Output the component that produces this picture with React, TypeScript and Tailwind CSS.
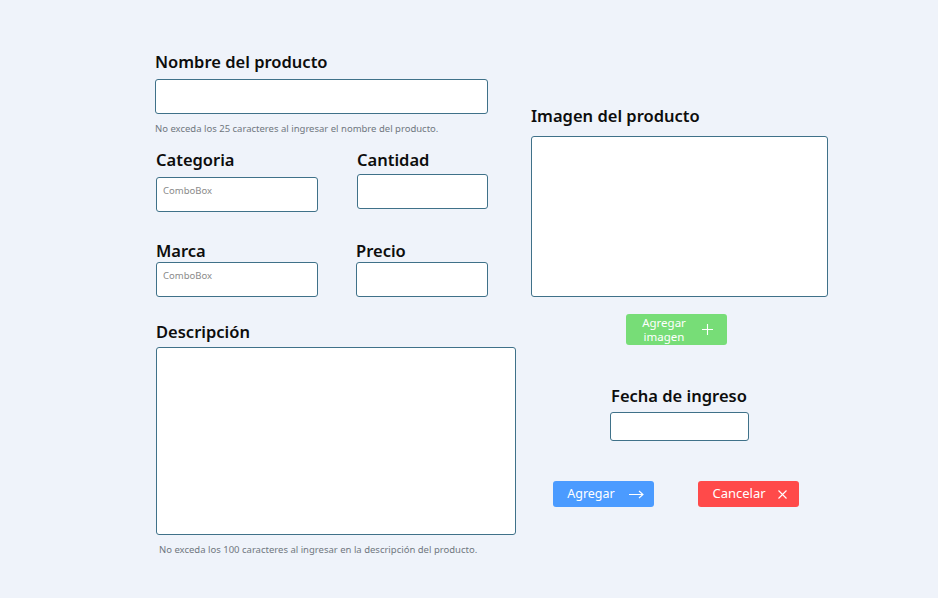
import React from "react";

const font = { fontFamily: '"Noto Sans", "Open Sans", sans-serif' };

function Label({ children, className = "" }: { children: React.ReactNode; className?: string }) {
  return (
    <div className={`text-[16.5px] leading-[22px] font-semibold text-[#0d0d0d] whitespace-nowrap ${className}`}>{children}</div>
  );
}

function Box({ className = "", children }: { className?: string; children?: React.ReactNode }) {
  return (
    <div className={`bg-white border border-[#3f7189] rounded-[3px] ${className}`}>{children}</div>
  );
}

function Combo() {
  return (
    <Box className="w-[162px] h-[35px] px-[6px] pt-[7px]">
      <div className="text-[9.5px] leading-[12px] text-[#8a8a8a]">ComboBox</div>
    </Box>
  );
}

export default function App() {
  return (
    <div style={font} className="w-[938px] h-[598px] bg-[#eff3fa] flex pl-[155px] pt-[51px] overflow-hidden">
      {/* Left column */}
      <div className="w-[361px] flex flex-col">
        <Label>Nombre del producto</Label>
        <Box className="w-[333px] h-[35px] mt-[6px]" />
        <div className="text-[9.5px] leading-[12px] text-[#707780] mt-[9px] whitespace-nowrap">
          No exceda los 25 caracteres al ingresar el nombre del producto.
        </div>
        <div className="flex mt-[14px] pl-[1px]">
          <div className="w-[201px]">
            <Label>Categoria</Label>
            <div className="mt-[6px]">
              <Combo />
            </div>
          </div>
          <div>
            <Label>Cantidad</Label>
            <Box className="w-[131px] h-[35px] mt-[3px]" />
          </div>
        </div>
        <div className="flex mt-[28px] pl-[1px]">
          <div className="w-[200px]">
            <Label>Marca</Label>
            <Combo />
          </div>
          <div>
            <Label>Precio</Label>
            <Box className="w-[132px] h-[35px]" />
          </div>
        </div>
        <Label className="mt-[24px] pl-[1px]">Descripción</Label>
        <Box className="ml-[1px] w-[360px] h-[188px] mt-[4px]" />
        <div className="text-[9.5px] leading-[12px] text-[#707780] mt-[9px] pl-[4px] whitespace-nowrap">
          No exceda los 100 caracteres al ingresar en la descripción del producto.
        </div>
      </div>

      {/* Right column */}
      <div className="ml-[15px] w-[297px] flex flex-col pt-[54px]">
        <Label>Imagen del producto</Label>
        <Box className="w-[297px] h-[161px] mt-[9px]" />
        <div className="flex justify-center mt-[17px] pr-[6px]">
          <button className="w-[101px] h-[31px] rounded-[3px] bg-[#77dd77] text-white flex items-center justify-center gap-[16px] pl-[2px]">
            <span className="text-[11.5px] leading-[14px] text-center">
              Agregar
              <br />
              imagen
            </span>
            <svg width="11" height="11" viewBox="0 0 11 11" fill="none" stroke="white" strokeWidth="1.1">
              <path d="M5.5 0v11M0 5.5h11" />
            </svg>
          </button>
        </div>
        <div className="flex flex-col items-center mt-[40px]">
          <div className="w-[139px]">
            <Label className="pl-[1px]">Fecha de ingreso</Label>
            <Box className="w-[139px] h-[29px] mt-[5px]" />
          </div>
        </div>
        <div className="flex mt-[40px] ml-[22px] gap-[44px]">
          <button className="w-[101px] h-[26px] rounded-[3px] bg-[#4b9bff] text-white flex items-center justify-center gap-[14px] text-[12.5px] pl-[4px]">
            <span>Agregar</span>
            <svg width="15" height="9" viewBox="0 0 15 9" fill="none" stroke="white" strokeWidth="1.1">
              <path d="M0 4.5h14M10 1l4 3.5-4 3.5" />
            </svg>
          </button>
          <button className="w-[101px] h-[26px] rounded-[3px] bg-[#ff4a4a] text-white flex items-center justify-center gap-[12px] text-[13px] pl-[2px]">
            <span>Cancelar</span>
            <svg width="9" height="9" viewBox="0 0 9 9" fill="none" stroke="white" strokeWidth="1.1">
              <path d="M0.5 0.5l8 8M8.5 0.5l-8 8" />
            </svg>
          </button>
        </div>
      </div>
    </div>
  );
}
